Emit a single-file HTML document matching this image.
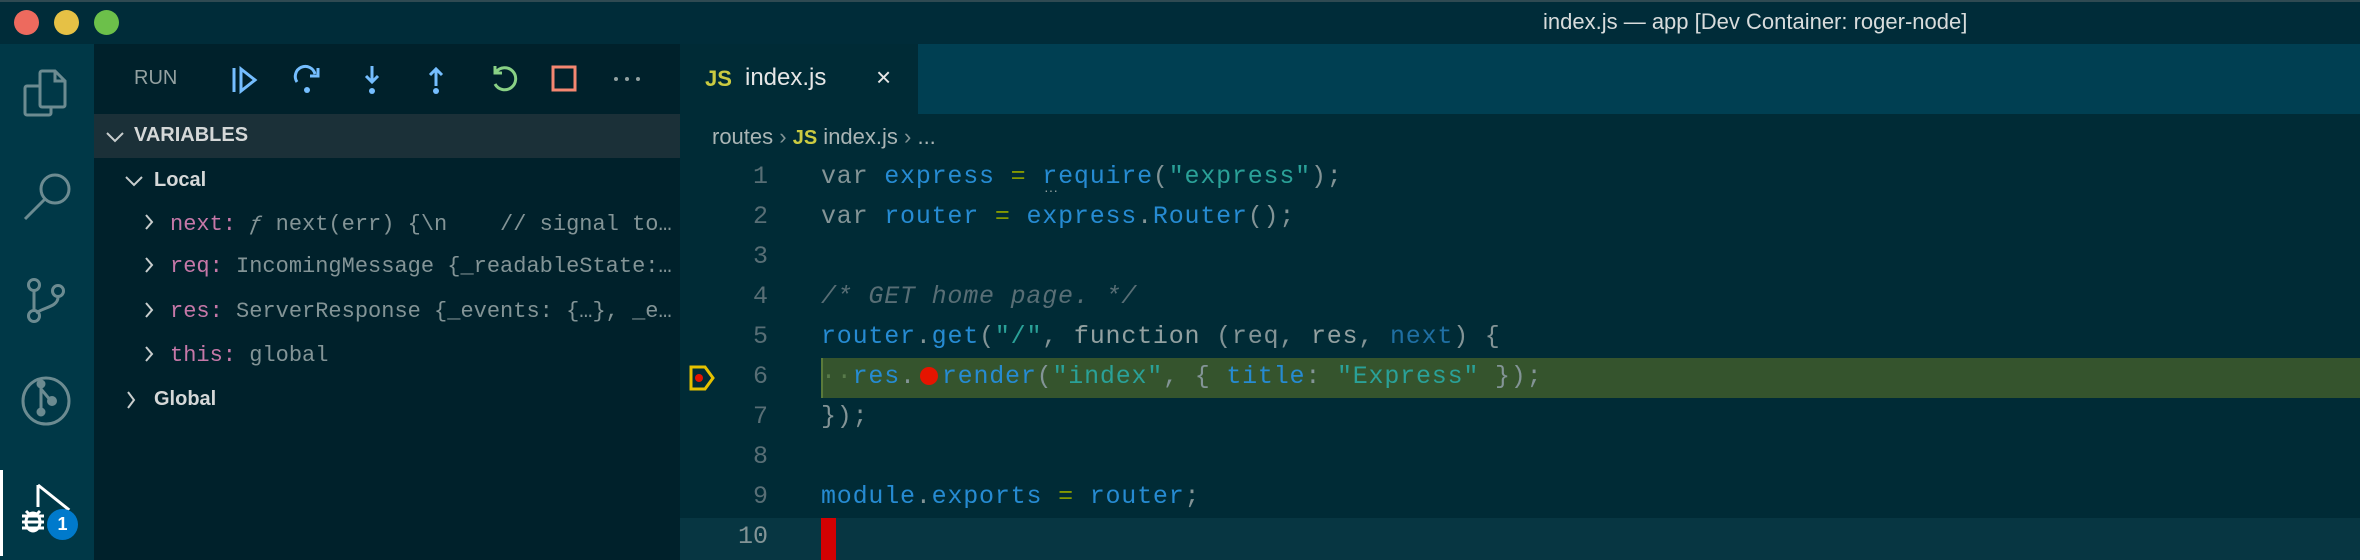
<!DOCTYPE html>
<html><head><meta charset="utf-8"><style>
*{margin:0;padding:0;box-sizing:border-box}
body{width:2360px;height:560px;overflow:hidden;background:#002b36;font-family:"Liberation Sans",sans-serif;position:relative}
.abs{position:absolute}
.code{font-family:"Liberation Mono",monospace;font-size:25px;letter-spacing:0.8px;color:#839496;white-space:pre;position:absolute;left:821px;line-height:40px}
.ln{position:absolute;width:60px;left:708px;text-align:right;font-family:"Liberation Mono",monospace;font-size:25px;color:#586e75;line-height:40px}
.var{position:absolute;font-family:"Liberation Mono",monospace;font-size:22px;color:#839496;white-space:pre;line-height:30px}
.k{color:#c678a8}
.b{color:#268bd2}.s{color:#2aa198}.g{color:#859900}.c{color:#586e75;font-style:italic}.w{color:#93a1a1}.d{color:#1f6fa3}
</style></head><body>
<div class="abs" style="left:0;top:0;width:2360px;height:44px;background:#002c39;border-top:2px solid #2f4a52"></div>
<div class="abs" style="left:14px;top:10px;width:25px;height:25px;border-radius:50%;background:#ed6a5e"></div>
<div class="abs" style="left:54px;top:10px;width:25px;height:25px;border-radius:50%;background:#e6c145"></div>
<div class="abs" style="left:94px;top:10px;width:25px;height:25px;border-radius:50%;background:#6cc04a"></div>
<div class="abs" style="left:1543px;top:8px;font-size:22px;color:#d8dcdc;line-height:28px">index.js — app [Dev Container: roger-node]</div>
<div class="abs" style="left:0;top:44px;width:94px;height:516px;background:#003847"></div>
<svg class="abs" style="left:0;top:44px" width="94" height="516" fill="none" stroke="#6c8b91" stroke-width="3">
<path d="M42 27h13l10 10v24a2 2 0 0 1-2 2H42a2 2 0 0 1-2-2V29a2 2 0 0 1 2-2z"/><path d="M55 27v10h10"/><path d="M40 42h-13a2 2 0 0 0-2 2v25a2 2 0 0 0 2 2h22a2 2 0 0 0 2-2v-6"/>
<circle cx="55" cy="145" r="14"/><path d="M45 155 25 175"/>
<circle cx="34" cy="241" r="5.5"/><circle cx="58" cy="247" r="5.5"/><circle cx="34" cy="272" r="5.5"/><path d="M34 247v19M58 253c0 10-14 10-22 16"/>
<circle cx="46" cy="357" r="23"/><path d="M41 340v28M41 345l10 12"/>
<circle cx="41" cy="340" r="3" fill="#6c8b91"/><circle cx="41" cy="368" r="3" fill="#6c8b91"/><circle cx="52" cy="357" r="3.5" fill="#6c8b91"/>
</svg>
<div class="abs" style="left:0;top:470px;width:3px;height:86px;background:#fff"></div>
<svg class="abs" style="left:0;top:470px" width="94" height="90" fill="none" stroke="#fff" stroke-width="3">
<path d="M38 15v22M38 15l30 24-4 4"/>
<ellipse cx="33" cy="52" rx="7" ry="9"/><path d="M22 46h22M22 52h22M22 58h22M26 41l3 3M40 41l-3 3"/>
</svg>
<div class="abs" style="left:47px;top:509px;width:31px;height:31px;border-radius:50%;background:#007acc;color:#fff;font-weight:bold;font-size:18px;text-align:center;line-height:31px">1</div>
<div class="abs" style="left:94px;top:44px;width:586px;height:516px;background:#00212b"></div>
<div class="abs" style="left:134px;top:67px;font-size:20px;color:#93a1a1">RUN</div>
<svg class="abs" style="left:94px;top:44px" width="586" height="70" fill="none" stroke-width="3">
<path d="M140 24v24" stroke="#75beff"/><path d="M147 25l14 11-14 11z" stroke="#75beff"/>
<path d="M203 38a10 10 0 1 1 18-8" stroke="#75beff"/><path d="M224 24v8h-8" stroke="#75beff"/><circle cx="213" cy="46" r="3" fill="#75beff" stroke="none"/>
<path d="M278 22v16M272 32l6 6 6-6" stroke="#75beff"/><circle cx="278" cy="47" r="3" fill="#75beff" stroke="none"/>
<path d="M342 42V25M336 31l6-6 6 6" stroke="#75beff"/><circle cx="342" cy="47" r="3" fill="#75beff" stroke="none"/>
<path d="M402 28a11 11 0 1 1-1 12" stroke="#89d185"/><path d="M401 22v7h7" stroke="#89d185"/>
<rect x="459" y="23" width="22" height="23" stroke="#f48771"/>
<circle cx="522" cy="35" r="2" fill="#93a1a1" stroke="none"/><circle cx="533" cy="35" r="2" fill="#93a1a1" stroke="none"/><circle cx="544" cy="35" r="2" fill="#93a1a1" stroke="none"/>
</svg>
<div class="abs" style="left:94px;top:114px;width:586px;height:44px;background:#1b3038"></div>
<svg class="abs" style="left:94px;top:114px" width="586" height="310" fill="none" stroke="#c8cdcd" stroke-width="2">
<path d="M13 19l8 8 8-8"/>
<path d="M32 63l8 8 8-8"/>
<path d="M52 101l6 7-6 7M52 144l6 7-6 7M52 189l6 7-6 7M52 233l6 7-6 7"/>
<path d="M34 278l6 8-6 8"/>
</svg>
<div class="abs" style="left:134px;top:124px;font-size:20px;font-weight:bold;color:#d5d8d8">VARIABLES</div>
<div class="abs" style="left:154px;top:169px;font-size:20px;font-weight:bold;color:#d5d8d8">Local</div>
<div class="var" style="left:170px;top:210px"><span class="k">next:</span> <i>ƒ</i> next(err) {\n    // signal to…</div>
<div class="var" style="left:170px;top:252px"><span class="k">req:</span> IncomingMessage {_readableState:…</div>
<div class="var" style="left:170px;top:297px"><span class="k">res:</span> ServerResponse {_events: {…}, _e…</div>
<div class="var" style="left:170px;top:341px"><span class="k">this:</span> global</div>
<div class="abs" style="left:154px;top:388px;font-size:20px;font-weight:bold;color:#d5d8d8">Global</div>
<div class="abs" style="left:680px;top:44px;width:1680px;height:70px;background:#003f52"></div>
<div class="abs" style="left:680px;top:44px;width:238px;height:70px;background:#002b36"></div>
<div class="abs" style="left:705px;top:66px;font-size:22px;font-weight:bold;color:#cbcb41">JS</div>
<div class="abs" style="left:745px;top:64px;font-size:24px;color:#e6e6e6">index.js</div>
<div class="abs" style="left:876px;top:62px;font-size:26px;color:#e6e6e6">×</div>
<div class="abs" style="left:712px;top:124px;font-size:22px;color:#aab5b5;white-space:pre">routes <span style="color:#839496">›</span> <b style="color:#cbcb41;font-size:20px">JS</b> index.js <span style="color:#839496">›</span> ...</div>
<div class="abs" style="left:821px;top:358px;width:1539px;height:40px;background:#35542d;border-left:2px solid #5a7a3a"></div>
<div class="abs" style="left:680px;top:518px;width:1680px;height:42px;background:#073642"></div>
<div class="abs" style="left:821px;top:518px;width:15px;height:42px;background:#d30102"></div>
<svg class="abs" style="left:688px;top:364px" width="28" height="28"><path d="M3 3h14l8 11-8 11H3z" fill="none" stroke="#e5c100" stroke-width="3"/><circle cx="11" cy="14" r="4" fill="#e51400"/></svg>
<div class="ln" style="top:157px">1</div><div class="ln" style="top:197px">2</div><div class="ln" style="top:237px">3</div><div class="ln" style="top:277px">4</div><div class="ln" style="top:317px">5</div><div class="ln" style="top:357px">6</div><div class="ln" style="top:397px">7</div><div class="ln" style="top:437px">8</div><div class="ln" style="top:477px">9</div><div class="ln" style="top:517px;color:#839496">10</div>
<div class="code" style="top:157px">var <span class="b">express</span> <span class="g">=</span> <span class="b">require</span>(<span class="s">"express"</span>);</div>
<div class="abs" style="left:1044px;top:182px;color:#93a1a1;font-size:14px">···</div>
<div class="code" style="top:197px">var <span class="b">router</span> <span class="g">=</span> <span class="b">express</span>.<span class="b">Router</span>();</div>
<div class="code" style="top:277px"><span class="c">/* GET home page. */</span></div>
<div class="code" style="top:317px"><span class="b">router</span>.<span class="b">get</span>(<span class="s">"/"</span>, <span class="w">function</span> (req, <span class="w">res</span>, <span class="d">next</span>) {</div>
<div class="code" style="top:357px"><span style="color:#587a4a">··</span><span class="b">res</span>.<span style="display:inline-block;width:18px;height:18px;border-radius:50%;background:#e51400;margin:0 4px;vertical-align:-2px"></span><span class="b">render</span>(<span class="s">"index"</span>, { <span class="b">title</span>: <span class="s">"Express"</span> });</div>
<div class="code" style="top:397px">});</div>
<div class="code" style="top:477px"><span class="b">module</span>.<span class="b">exports</span> <span class="g">=</span> <span class="b">router</span>;</div>
</body></html>
